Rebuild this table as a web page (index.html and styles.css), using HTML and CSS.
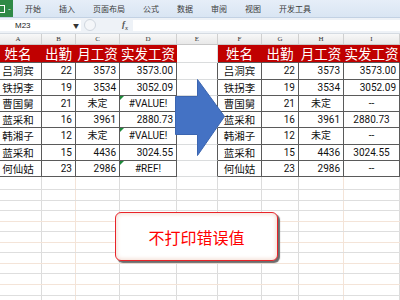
FILE: index.html
```html
<!DOCTYPE html>
<html>
<head>
<meta charset="utf-8">
<link rel="stylesheet" href="styles.css">
</head>
<body>
<div class="ribbon">
  <div class="file"><span class="fmark"></span><span class="fdash">-</span></div>
  <span class="tab">开始</span>
  <span class="tab">插入</span>
  <span class="tab">页面布局</span>
  <span class="tab">公式</span>
  <span class="tab">数据</span>
  <span class="tab">审阅</span>
  <span class="tab">视图</span>
  <span class="tab">开发工具</span>
</div>
<div class="fbar">
  <div class="namebox"><span class="ref">M23</span><span class="dd">▼</span></div>
  <div class="fbtns"><span class="circ"></span><span class="fx">f<sub>x</sub></span></div>
  <div class="finput"></div>
</div>
<div class="sheet">
  <div class="colhdr">
    <div>A</div><div>B</div><div>C</div><div>D</div><div>E</div><div>F</div><div>G</div><div>H</div><div>I</div><div></div>
  </div>
  <div class="grid">
    <div class="h">姓名</div><div class="h">出勤</div><div class="h">月工资</div><div class="h">实发工资</div><div class="e"></div>
    <div class="h">姓名</div><div class="h">出勤</div><div class="h">月工资</div><div class="h">实发工资</div><div class="j"></div>

    <div class="t n">吕洞宾</div><div class="t r">22</div><div class="t r">3573</div><div class="t r">3573.00</div><div class="e b"></div>
    <div class="t n">吕洞宾</div><div class="t r">22</div><div class="t r">3573</div><div class="t r">3573.00</div><div class="j"></div>

    <div class="t n">铁拐李</div><div class="t r">19</div><div class="t r">3534</div><div class="t r">3052.09</div><div class="e b"></div>
    <div class="t n">铁拐李</div><div class="t r">19</div><div class="t r">3534</div><div class="t r">3052.09</div><div class="j"></div>

    <div class="t n">曹国舅</div><div class="t r">21</div><div class="t c">未定</div><div class="t c err">#VALUE!</div><div class="e b"></div>
    <div class="t n">曹国舅</div><div class="t r">21</div><div class="t c">未定</div><div class="t c">--</div><div class="j"></div>

    <div class="t n">蓝采和</div><div class="t r">16</div><div class="t r">3961</div><div class="t r">2880.73</div><div class="e b"></div>
    <div class="t n">蓝采和</div><div class="t r">16</div><div class="t r">3961</div><div class="t c">2880.73</div><div class="j"></div>

    <div class="t n">韩湘子</div><div class="t r">12</div><div class="t c">未定</div><div class="t c err">#VALUE!</div><div class="e b"></div>
    <div class="t n">韩湘子</div><div class="t r">12</div><div class="t c">未定</div><div class="t c">--</div><div class="j"></div>

    <div class="t n">蓝采和</div><div class="t r">15</div><div class="t r">4436</div><div class="t r">3024.55</div><div class="e b"></div>
    <div class="t n">蓝采和</div><div class="t r">15</div><div class="t r">4436</div><div class="t c">3024.55</div><div class="j"></div>

    <div class="t n">何仙姑</div><div class="t r">23</div><div class="t r">2986</div><div class="t c err">#REF!</div><div class="e b"></div>
    <div class="t n">何仙姑</div><div class="t r">23</div><div class="t r">2986</div><div class="t c">--</div><div class="j"></div>
  </div>
  <div class="blank">
    <div class="br r13"></div>
    <div class="br r11"></div>
    <div class="br r10"></div>
    <div class="br r11 pk"></div>
    <div class="br r10"></div>
    <div class="br r11 pk"></div>
    <div class="br r10"></div>
    <div class="br r11 pk"></div>
    <div class="br r10"></div>
    <div class="br r11 pk"></div>
    <div class="br r11"></div>
  </div>
</div>
<svg class="arrow" width="52" height="80" viewBox="0 0 52 80">
  <polygon points="0.5,17.5 22.5,17.5 22.5,0.5 49.5,37.5 22.5,76.5 22.5,55.5 0.5,55.5" fill="#4472c4" stroke="#3b65b0" stroke-width="1"/>
</svg>
<div class="note">不打印错误值</div>
</body>
</html>
```

FILE: styles.css
```css
html, body {
  margin: 0;
  padding: 0;
  width: 400px;
  height: 300px;
  overflow: hidden;
  background: #ffffff;
  font-family: "Noto Sans CJK SC", sans-serif;
}

.ribbon {
  display: flex;
  align-items: center;
  height: 17px;
  background: linear-gradient(#e6eef8, #d9e5f3);
  border-bottom: 1px solid #c2d1e3;
}
.file {
  width: 13px;
  height: 17px;
  background: #2f8a46;
  display: flex;
  align-items: center;
  gap: 3px;
  margin-right: 3px;
}
.fmark {
  width: 4px;
  height: 6px;
  border: 1px solid #ffffff;
  border-left: none;
}
.fdash {
  color: #fff;
  font-family: "Liberation Sans", sans-serif;
  font-size: 8px;
  line-height: 8px;
}
.tab {
  padding: 0 9px;
  font-size: 8px;
  line-height: 12px;
  color: #3a3a3a;
}

.fbar {
  display: flex;
  align-items: center;
  height: 15px;
  background: #eef2f7;
  border-bottom: 1px solid #d5dbe2;
}
.namebox {
  width: 81px;
  height: 11px;
  background: #fff;
  display: flex;
  align-items: center;
  justify-content: space-between;
  box-sizing: border-box;
  padding: 0 2px 0 15px;
}
.ref {
  font-family: "Liberation Sans", sans-serif;
  font-size: 8px;
  line-height: 10px;
  color: #222;
}
.dd {
  font-size: 6px;
  line-height: 8px;
  color: #333;
}
.fbtns {
  width: 52px;
  display: flex;
  align-items: center;
  padding-left: 3px;
  box-sizing: border-box;
}
.circ {
  width: 10px;
  height: 10px;
  border-radius: 50%;
  border: 1px solid #cfd6de;
  background: #f4f6f9;
}
.fx {
  margin-left: 26px;
  font-family: "Liberation Serif", serif;
  font-style: italic;
  font-weight: bold;
  font-size: 9px;
  line-height: 10px;
  color: #555;
}
.fx sub {
  font-size: 6px;
}
.finput {
  flex: 1;
  height: 11px;
  background: #fff;
}

.sheet {
  margin-left: -5px;
  width: 425px;
}
.colhdr {
  display: grid;
  grid-template-columns: 47px 34px 44px 57px 41px 44px 37px 45px 56px 20px;
  height: 10px;
  background: linear-gradient(#f8f8f8, #e8e8e8);
  border-bottom: 1px solid #c8c8c8;
}
.colhdr div {
  border-right: 1px solid #d0d0d0;
  font-family: "Liberation Serif", serif;
  font-size: 7px;
  line-height: 10px;
  text-align: center;
  color: #333;
}

.grid {
  display: grid;
  grid-template-columns: 47px 34px 44px 57px 41px 44px 37px 45px 56px 20px;
  grid-template-rows: 18px 17px 16px 16px 16px 17px 16px 16px;
}
.grid div {
  box-sizing: border-box;
  border-right: 1px solid #dadcdd;
  border-bottom: 1px solid #dadcdd;
  white-space: nowrap;
}
.grid .h {
  background: #c00000;
  color: #fff;
  font-size: 13.5px;
  line-height: 17px;
  text-align: center;
  border-right-color: #c00000;
  border-bottom-color: #5a5a5a;
}
.grid .t {
  border-right-color: #5a5a5a;
  border-bottom-color: #5a5a5a;
  font-family: Roboto, "Noto Sans CJK SC", sans-serif;
  font-size: 10px;
  line-height: 15px;
  color: #111;
}
.grid .n {
  font-family: "Noto Sans CJK SC", sans-serif;
  font-size: 10.5px;
  text-align: center;
}
.grid .r {
  text-align: right;
  padding-right: 3px;
}
.grid .c {
  text-align: center;
}
.grid .b {
  border-right-color: #5a5a5a;
}
.grid .err {
  position: relative;
}
.grid .err::before {
  content: "";
  position: absolute;
  left: 0;
  top: 0;
  border-top: 4px solid #1d8a3a;
  border-right: 4px solid transparent;
}

.blank {
  height: 130px;
  background-image:
    linear-gradient(#dcdcdc, #dcdcdc),
    linear-gradient(#f4e4d8, #f4e4d8),
    linear-gradient(#dcdcdc, #dcdcdc),
    linear-gradient(#dcdcdc, #dcdcdc),
    linear-gradient(#dcdcdc, #dcdcdc),
    linear-gradient(#dcdcdc, #dcdcdc),
    linear-gradient(#dcdcdc, #dcdcdc),
    linear-gradient(#f4e4d8, #f4e4d8),
    linear-gradient(#dcdcdc, #dcdcdc);
  background-size: 1px 100%;
  background-repeat: no-repeat;
  background-position: 46px 0, 80px 0, 124px 0, 181px 0, 222px 0, 266px 0, 303px 0, 348px 0, 404px 0;
}
.br {
  box-sizing: border-box;
  border-bottom: 1px solid #dedede;
}
.br.pk {
  border-bottom-color: #f4e4d8;
}
.r13 { height: 13px; }
.r11 { height: 11px; }
.r10 { height: 10px; }

.arrow {
  position: absolute;
  left: 175px;
  top: 79px;
}

.note {
  position: absolute;
  left: 115px;
  top: 212px;
  width: 163px;
  height: 49px;
  box-sizing: border-box;
  border: 1px solid #e8242a;
  border-radius: 6px;
  background: #fff;
  box-shadow: inset 0 0 4px 1px #f3dcd2, 2px 2px 1px #6b6b6b;
  display: flex;
  align-items: center;
  justify-content: center;
  color: #ff0000;
  font-size: 16px;
  line-height: 20px;
  font-family: "Noto Sans CJK SC", sans-serif;
}
```
